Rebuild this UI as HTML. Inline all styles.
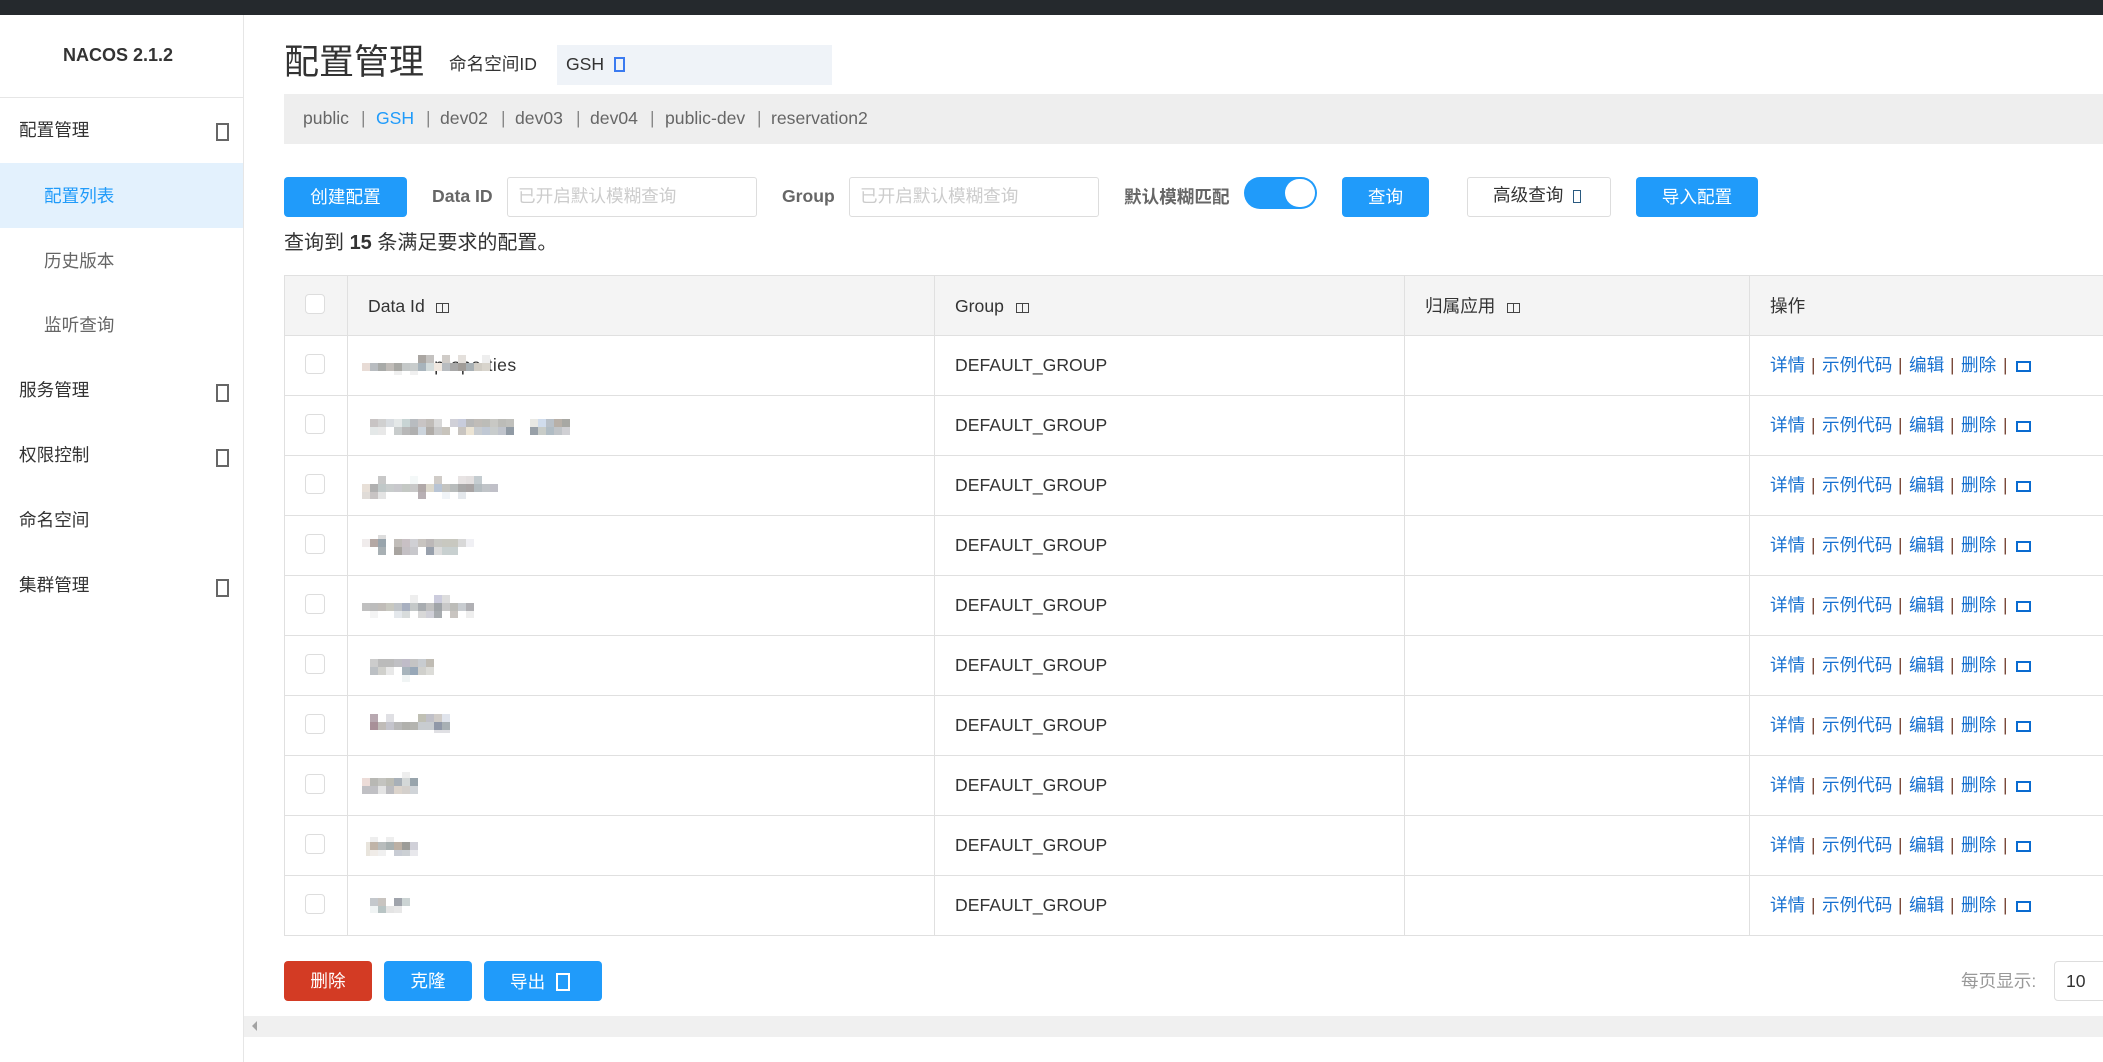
<!DOCTYPE html>
<html lang="zh"><head><meta charset="utf-8"><title>NACOS</title>
<style>
html,body{margin:0;padding:0;background:#fff}
#p{position:relative;width:2103px;height:1062px;overflow:hidden;background:#fff;font-family:"Liberation Sans","Noto Sans CJK SC",sans-serif;font-size:17.6px;color:#333}
#p div,#p span{position:absolute;box-sizing:border-box}
.t{white-space:nowrap;line-height:24px;height:24px}
.m{color:#333}.s{color:#666}
.b{background:#209bfa;border-radius:4px;color:#fff;height:40px;line-height:40px;text-align:center;top:177px}
.i{border:1px solid #ddd;border-radius:3px;background:#fff;height:40px;top:177px}
.ph{color:#ccc}
.lb{font-weight:bold;color:#666}
.ic{border:2px solid #666;width:13px;height:18px}
.h{height:1px;background:#e0e0e0;left:284px;width:1819px}
.v{width:1px;background:#e0e0e0;top:275px;height:661px}
.c{left:305px;width:20px;height:20px;border:1px solid #ddd;border-radius:4px;background:#fff}
.g{left:955px;color:#333}
.a{color:#1670d0}.pp{color:#7a4a3a}
.e{left:2016px;width:15px;height:11px;border:2px solid #0a6bd0}
</style></head><body><div id="p">
<div style="left:0;top:0;width:2103px;height:15px;background:#25292d"></div>
<!-- sidebar -->
<div style="left:243px;top:15px;width:1px;height:1047px;background:#e6e6e6"></div>
<div style="left:0;top:97px;width:243px;height:1px;background:#e6e6e6"></div>
<div class="t" style="left:63px;top:43px;font-weight:bold;font-size:18px;color:#333">NACOS 2.1.2</div>
<div style="left:0;top:163px;width:243px;height:65px;background:#e3f1fd"></div>
<div class="t m" style="left:19px;top:118px">配置管理</div>
<div class="ic" style="left:216px;top:123px"></div>
<div class="t" style="left:44px;top:184px;color:#209bfa">配置列表</div>
<div class="t s" style="left:44px;top:249px">历史版本</div>
<div class="t s" style="left:44px;top:313px">监听查询</div>
<div class="t m" style="left:19px;top:378px">服务管理</div>
<div class="ic" style="left:216px;top:384px"></div>
<div class="t m" style="left:19px;top:443px">权限控制</div>
<div class="ic" style="left:216px;top:449px"></div>
<div class="t m" style="left:19px;top:508px">命名空间</div>
<div class="t m" style="left:19px;top:573px">集群管理</div>
<div class="ic" style="left:216px;top:579px"></div>
<!-- header -->
<div class="t" style="left:284px;top:39px;font-size:35px;line-height:48px;height:48px;color:#333">配置管理</div>
<div class="t m" style="left:449px;top:52px">命名空间ID</div>
<div style="left:557px;top:45px;width:275px;height:40px;background:#eff3f8"></div>
<div class="t m" style="left:566px;top:52px">GSH</div>
<div style="left:614px;top:57px;width:11px;height:15px;border:2px solid #3a7af0"></div>
<div style="left:284px;top:94px;width:1819px;height:50px;background:#eee"></div>
<div class="t s" style="left:303px;top:106px">public</div>
<div class="t" style="left:361px;top:106px;color:#888">|</div>
<div class="t" style="left:376px;top:106px;color:#209bfa">GSH</div>
<div class="t" style="left:426px;top:106px;color:#888">|</div>
<div class="t s" style="left:440px;top:106px">dev02</div>
<div class="t" style="left:501px;top:106px;color:#888">|</div>
<div class="t s" style="left:515px;top:106px">dev03</div>
<div class="t" style="left:576px;top:106px;color:#888">|</div>
<div class="t s" style="left:590px;top:106px">dev04</div>
<div class="t" style="left:650px;top:106px;color:#888">|</div>
<div class="t s" style="left:665px;top:106px">public-dev</div>
<div class="t" style="left:757px;top:106px;color:#888">|</div>
<div class="t s" style="left:771px;top:106px">reservation2</div>
<!-- search row -->
<div class="b" style="left:284px;width:123px">创建配置</div>
<div class="t lb" style="left:432px;top:184px">Data ID</div>
<div class="i" style="left:507px;width:250px"></div>
<div class="t ph" style="left:518px;top:184px">已开启默认模糊查询</div>
<div class="t lb" style="left:782px;top:184px">Group</div>
<div class="i" style="left:849px;width:250px"></div>
<div class="t ph" style="left:860px;top:184px">已开启默认模糊查询</div>
<div class="t lb" style="left:1124px;top:185px">默认模糊匹配</div>
<div style="left:1244px;top:177px;width:73px;height:32px;border-radius:16px;background:#209bfa"></div>
<div style="left:1285px;top:179px;width:30px;height:28px;border-radius:15px;background:#fff"></div>
<div class="b" style="left:1342px;width:87px">查询</div>
<div class="i" style="left:1467px;width:144px"></div>
<div class="t" style="left:1493px;top:183px;color:#333">高级查询</div>
<div style="left:1573px;top:190px;width:8px;height:13px;border:1.5px solid #2a5a80"></div>
<div class="b" style="left:1636px;width:122px">导入配置</div>
<div class="t m" style="left:284px;top:231px;font-size:20px">查询到 <b>15</b> 条满足要求的配置。</div>
<!-- table -->
<div style="left:284px;top:275px;width:1819px;height:60px;background:#f4f4f4"></div>
<div class="h" style="top:275px"></div><div class="h" style="top:335px"></div><div class="h" style="top:395px"></div><div class="h" style="top:455px"></div><div class="h" style="top:515px"></div><div class="h" style="top:575px"></div><div class="h" style="top:635px"></div><div class="h" style="top:695px"></div><div class="h" style="top:755px"></div><div class="h" style="top:815px"></div><div class="h" style="top:875px"></div><div class="h" style="top:935px"></div>
<div class="v" style="left:284px"></div><div class="v" style="left:347px"></div><div class="v" style="left:934px"></div><div class="v" style="left:1404px"></div><div class="v" style="left:1749px"></div>
<div class="c" style="top:294px"></div><div class="c" style="top:354px"></div><div class="c" style="top:414px"></div><div class="c" style="top:474px"></div><div class="c" style="top:534px"></div><div class="c" style="top:594px"></div><div class="c" style="top:654px"></div><div class="c" style="top:714px"></div><div class="c" style="top:774px"></div><div class="c" style="top:834px"></div><div class="c" style="top:894px"></div>
<div class="t m" style="left:368px;top:294px">Data Id</div>
<div style="left:436px;top:303px;width:7px;height:10px;border:1px solid #444"></div><div style="left:442px;top:303px;width:7px;height:10px;border:1px solid #444"></div>
<div class="t m" style="left:955px;top:294px">Group</div>
<div style="left:1016px;top:303px;width:7px;height:10px;border:1px solid #444"></div><div style="left:1022px;top:303px;width:7px;height:10px;border:1px solid #444"></div>
<div class="t m" style="left:1425px;top:294px">归属应用</div>
<div style="left:1507px;top:303px;width:7px;height:10px;border:1px solid #444"></div><div style="left:1513px;top:303px;width:7px;height:10px;border:1px solid #444"></div>
<div class="t m" style="left:1770px;top:294px">操作</div>
<div class="t m" style="left:429px;top:353px;letter-spacing:.4px">.properties</div>
<div class="t g" style="top:353px">DEFAULT_GROUP</div>
<div class="t g" style="top:413px">DEFAULT_GROUP</div>
<div class="t g" style="top:473px">DEFAULT_GROUP</div>
<div class="t g" style="top:533px">DEFAULT_GROUP</div>
<div class="t g" style="top:593px">DEFAULT_GROUP</div>
<div class="t g" style="top:653px">DEFAULT_GROUP</div>
<div class="t g" style="top:713px">DEFAULT_GROUP</div>
<div class="t g" style="top:773px">DEFAULT_GROUP</div>
<div class="t g" style="top:833px">DEFAULT_GROUP</div>
<div class="t g" style="top:893px">DEFAULT_GROUP</div>
<div class="t a" style="left:1770px;top:353px">详情</div><div class="t pp" style="left:1811px;top:353px">|</div><div class="t a" style="left:1822px;top:353px">示例代码</div><div class="t pp" style="left:1898px;top:353px">|</div><div class="t a" style="left:1909px;top:353px">编辑</div><div class="t pp" style="left:1950px;top:353px">|</div><div class="t a" style="left:1961px;top:353px">删除</div><div class="t pp" style="left:2003px;top:353px">|</div><div class="e" style="top:361px"></div>
<div class="t a" style="left:1770px;top:413px">详情</div><div class="t pp" style="left:1811px;top:413px">|</div><div class="t a" style="left:1822px;top:413px">示例代码</div><div class="t pp" style="left:1898px;top:413px">|</div><div class="t a" style="left:1909px;top:413px">编辑</div><div class="t pp" style="left:1950px;top:413px">|</div><div class="t a" style="left:1961px;top:413px">删除</div><div class="t pp" style="left:2003px;top:413px">|</div><div class="e" style="top:421px"></div>
<div class="t a" style="left:1770px;top:473px">详情</div><div class="t pp" style="left:1811px;top:473px">|</div><div class="t a" style="left:1822px;top:473px">示例代码</div><div class="t pp" style="left:1898px;top:473px">|</div><div class="t a" style="left:1909px;top:473px">编辑</div><div class="t pp" style="left:1950px;top:473px">|</div><div class="t a" style="left:1961px;top:473px">删除</div><div class="t pp" style="left:2003px;top:473px">|</div><div class="e" style="top:481px"></div>
<div class="t a" style="left:1770px;top:533px">详情</div><div class="t pp" style="left:1811px;top:533px">|</div><div class="t a" style="left:1822px;top:533px">示例代码</div><div class="t pp" style="left:1898px;top:533px">|</div><div class="t a" style="left:1909px;top:533px">编辑</div><div class="t pp" style="left:1950px;top:533px">|</div><div class="t a" style="left:1961px;top:533px">删除</div><div class="t pp" style="left:2003px;top:533px">|</div><div class="e" style="top:541px"></div>
<div class="t a" style="left:1770px;top:593px">详情</div><div class="t pp" style="left:1811px;top:593px">|</div><div class="t a" style="left:1822px;top:593px">示例代码</div><div class="t pp" style="left:1898px;top:593px">|</div><div class="t a" style="left:1909px;top:593px">编辑</div><div class="t pp" style="left:1950px;top:593px">|</div><div class="t a" style="left:1961px;top:593px">删除</div><div class="t pp" style="left:2003px;top:593px">|</div><div class="e" style="top:601px"></div>
<div class="t a" style="left:1770px;top:653px">详情</div><div class="t pp" style="left:1811px;top:653px">|</div><div class="t a" style="left:1822px;top:653px">示例代码</div><div class="t pp" style="left:1898px;top:653px">|</div><div class="t a" style="left:1909px;top:653px">编辑</div><div class="t pp" style="left:1950px;top:653px">|</div><div class="t a" style="left:1961px;top:653px">删除</div><div class="t pp" style="left:2003px;top:653px">|</div><div class="e" style="top:661px"></div>
<div class="t a" style="left:1770px;top:713px">详情</div><div class="t pp" style="left:1811px;top:713px">|</div><div class="t a" style="left:1822px;top:713px">示例代码</div><div class="t pp" style="left:1898px;top:713px">|</div><div class="t a" style="left:1909px;top:713px">编辑</div><div class="t pp" style="left:1950px;top:713px">|</div><div class="t a" style="left:1961px;top:713px">删除</div><div class="t pp" style="left:2003px;top:713px">|</div><div class="e" style="top:721px"></div>
<div class="t a" style="left:1770px;top:773px">详情</div><div class="t pp" style="left:1811px;top:773px">|</div><div class="t a" style="left:1822px;top:773px">示例代码</div><div class="t pp" style="left:1898px;top:773px">|</div><div class="t a" style="left:1909px;top:773px">编辑</div><div class="t pp" style="left:1950px;top:773px">|</div><div class="t a" style="left:1961px;top:773px">删除</div><div class="t pp" style="left:2003px;top:773px">|</div><div class="e" style="top:781px"></div>
<div class="t a" style="left:1770px;top:833px">详情</div><div class="t pp" style="left:1811px;top:833px">|</div><div class="t a" style="left:1822px;top:833px">示例代码</div><div class="t pp" style="left:1898px;top:833px">|</div><div class="t a" style="left:1909px;top:833px">编辑</div><div class="t pp" style="left:1950px;top:833px">|</div><div class="t a" style="left:1961px;top:833px">删除</div><div class="t pp" style="left:2003px;top:833px">|</div><div class="e" style="top:841px"></div>
<div class="t a" style="left:1770px;top:893px">详情</div><div class="t pp" style="left:1811px;top:893px">|</div><div class="t a" style="left:1822px;top:893px">示例代码</div><div class="t pp" style="left:1898px;top:893px">|</div><div class="t a" style="left:1909px;top:893px">编辑</div><div class="t pp" style="left:1950px;top:893px">|</div><div class="t a" style="left:1961px;top:893px">删除</div><div class="t pp" style="left:2003px;top:893px">|</div><div class="e" style="top:901px"></div>
<!-- mosaics -->
<svg width="2103" height="1062" style="position:absolute;left:0;top:0" shape-rendering="crispEdges">
<g id="r1"><rect x="418" y="355" width="8" height="8" fill="#aaa6a2"/><rect x="426" y="355" width="8" height="8" fill="#c4c2c0"/><rect x="442" y="355" width="8" height="8" fill="#d0ccc8"/><rect x="458" y="355" width="8" height="8" fill="#e4e0dc"/><rect x="482" y="355" width="8" height="8" fill="#eee"/>
<rect x="362" y="363" width="8" height="8" fill="#e8dcd6"/><rect x="370" y="363" width="8" height="8" fill="#b8bcc0"/><rect x="378" y="363" width="8" height="8" fill="#a8aaa8"/><rect x="386" y="363" width="8" height="8" fill="#c0bcb8"/><rect x="394" y="363" width="8" height="8" fill="#a8a8a4"/><rect x="402" y="363" width="8" height="8" fill="#c4c8c8"/><rect x="410" y="363" width="8" height="8" fill="#c8cccc"/><rect x="418" y="363" width="8" height="8" fill="#a8b4bc"/><rect x="426" y="363" width="8" height="8" fill="#d4dcdc"/><rect x="434" y="363" width="8" height="8" fill="#f0e8e0"/><rect x="442" y="363" width="8" height="8" fill="#b8bcc0"/><rect x="450" y="363" width="8" height="8" fill="#a8a8a8"/><rect x="458" y="363" width="8" height="8" fill="#a09c98"/><rect x="466" y="363" width="8" height="8" fill="#a8b0b4"/><rect x="474" y="363" width="8" height="8" fill="#d0ccc4"/><rect x="482" y="363" width="8" height="8" fill="#d8d4cc"/>
<rect x="394" y="371" width="8" height="4" fill="#f0f0f0"/><rect x="410" y="371" width="8" height="4" fill="#f0f0f0"/></g>
<g><rect x="370" y="419" width="8" height="8" fill="#c8c4c4"/><rect x="378" y="419" width="8" height="8" fill="#d0d0d0"/><rect x="386" y="419" width="8" height="8" fill="#d8dce0"/><rect x="394" y="419" width="8" height="8" fill="#e4e8e8"/><rect x="402" y="419" width="8" height="8" fill="#c8d4d4"/><rect x="410" y="419" width="8" height="8" fill="#b8bcc0"/><rect x="418" y="419" width="8" height="8" fill="#c8c4c4"/><rect x="426" y="419" width="8" height="8" fill="#c0bcb8"/><rect x="434" y="419" width="8" height="8" fill="#d8d8d8"/><rect x="450" y="419" width="8" height="8" fill="#d0d0d8"/><rect x="458" y="419" width="8" height="8" fill="#c8ccdc"/><rect x="466" y="419" width="8" height="8" fill="#b8b8b8"/><rect x="474" y="419" width="8" height="8" fill="#c0bcb8"/><rect x="482" y="419" width="8" height="8" fill="#bcbcb8"/><rect x="490" y="419" width="8" height="8" fill="#c8c8c4"/><rect x="498" y="419" width="8" height="8" fill="#bcbcb8"/><rect x="506" y="419" width="8" height="8" fill="#c0c0bc"/><rect x="530" y="419" width="8" height="8" fill="#e8e8e4"/><rect x="538" y="419" width="8" height="8" fill="#d0dcec"/><rect x="546" y="419" width="8" height="8" fill="#b8c0c8"/><rect x="554" y="419" width="8" height="8" fill="#b8b0a8"/><rect x="562" y="419" width="8" height="8" fill="#a8a8a4"/>
<rect x="370" y="427" width="8" height="8" fill="#e4e8e8"/><rect x="378" y="427" width="8" height="8" fill="#e8e8e8"/><rect x="394" y="427" width="8" height="8" fill="#c8cccc"/><rect x="402" y="427" width="8" height="8" fill="#b8b8b8"/><rect x="410" y="427" width="8" height="8" fill="#b0b0b0"/><rect x="418" y="427" width="8" height="8" fill="#ccd4dc"/><rect x="426" y="427" width="8" height="8" fill="#b0aca8"/><rect x="434" y="427" width="8" height="8" fill="#c8c8c8"/><rect x="442" y="427" width="8" height="8" fill="#c8c4bc"/><rect x="458" y="427" width="8" height="8" fill="#c8c4c0"/><rect x="466" y="427" width="8" height="8" fill="#ece4d4"/><rect x="474" y="427" width="8" height="8" fill="#c8ccd0"/><rect x="482" y="427" width="8" height="8" fill="#c0c8d4"/><rect x="490" y="427" width="8" height="8" fill="#c8cccc"/><rect x="498" y="427" width="8" height="8" fill="#c0c4cc"/><rect x="506" y="427" width="8" height="8" fill="#909aa4"/><rect x="530" y="427" width="8" height="8" fill="#98a0a8"/><rect x="538" y="427" width="8" height="8" fill="#c8ccc8"/><rect x="546" y="427" width="8" height="8" fill="#b0bcc4"/><rect x="554" y="427" width="8" height="8" fill="#c0c4c8"/><rect x="562" y="427" width="8" height="8" fill="#d0d0d4"/></g>
<g><rect x="378" y="476" width="8" height="8" fill="#c8c8c8"/><rect x="410" y="476" width="8" height="8" fill="#f4f8f8"/><rect x="434" y="476" width="8" height="8" fill="#d0ccc8"/><rect x="458" y="476" width="8" height="8" fill="#e8e4e4"/><rect x="466" y="476" width="8" height="8" fill="#e4e0e0"/><rect x="474" y="476" width="8" height="8" fill="#c4ccd0"/>
<rect x="362" y="484" width="8" height="8" fill="#e8e0d8"/><rect x="370" y="484" width="8" height="8" fill="#b0b0b0"/><rect x="378" y="484" width="8" height="8" fill="#c0c8c8"/><rect x="386" y="484" width="8" height="8" fill="#c8cccc"/><rect x="394" y="484" width="8" height="8" fill="#c8c8cc"/><rect x="402" y="484" width="8" height="8" fill="#c4c8c4"/><rect x="410" y="484" width="8" height="8" fill="#c8c8c8"/><rect x="418" y="484" width="8" height="8" fill="#b0a8a8"/><rect x="426" y="484" width="8" height="8" fill="#dcd8cc"/><rect x="434" y="484" width="8" height="8" fill="#b8c4d4"/><rect x="442" y="484" width="8" height="8" fill="#c4c4c0"/><rect x="450" y="484" width="8" height="8" fill="#b8bcbc"/><rect x="458" y="484" width="8" height="8" fill="#a8a8a8"/><rect x="466" y="484" width="8" height="8" fill="#a8a4a4"/><rect x="474" y="484" width="8" height="8" fill="#b4bcc0"/><rect x="482" y="484" width="8" height="8" fill="#c0c4c8"/><rect x="490" y="484" width="8" height="8" fill="#c0c0c8"/>
<rect x="362" y="492" width="8" height="7" fill="#e0dcd8"/><rect x="370" y="492" width="8" height="7" fill="#c8c4c4"/><rect x="378" y="492" width="8" height="7" fill="#e4e4e4"/><rect x="418" y="492" width="8" height="7" fill="#b8b0b4"/><rect x="442" y="492" width="8" height="7" fill="#f0f4f8"/><rect x="458" y="492" width="8" height="7" fill="#e4e8ec"/></g>
<g><rect x="378" y="535" width="8" height="4" fill="#ddd"/>
<rect x="362" y="539" width="8" height="8" fill="#f0ecec"/><rect x="370" y="539" width="8" height="8" fill="#b4a8a4"/><rect x="378" y="539" width="8" height="8" fill="#98a4ac"/><rect x="394" y="539" width="8" height="8" fill="#c0bcb8"/><rect x="402" y="539" width="8" height="8" fill="#c8c0c4"/><rect x="410" y="539" width="8" height="8" fill="#d0d0d4"/><rect x="418" y="539" width="8" height="8" fill="#c8c4c0"/><rect x="426" y="539" width="8" height="8" fill="#bcb8b8"/><rect x="434" y="539" width="8" height="8" fill="#c8c8c4"/><rect x="442" y="539" width="8" height="8" fill="#c8c8c0"/><rect x="450" y="539" width="8" height="8" fill="#c8c8c0"/><rect x="458" y="539" width="8" height="8" fill="#d8d8d8"/><rect x="466" y="539" width="8" height="8" fill="#f0f0f4"/>
<rect x="378" y="547" width="8" height="8" fill="#a8b0b4"/><rect x="394" y="547" width="8" height="8" fill="#a8a4a0"/><rect x="402" y="547" width="8" height="8" fill="#c4c0c4"/><rect x="410" y="547" width="8" height="8" fill="#c8c8cc"/><rect x="426" y="547" width="8" height="8" fill="#98a0ac"/><rect x="434" y="547" width="8" height="8" fill="#dcdcdc"/><rect x="442" y="547" width="16" height="8" fill="#c8d0d0"/></g>
<g><rect x="410" y="595" width="8" height="8" fill="#eee"/><rect x="434" y="595" width="8" height="8" fill="#ccd"/><rect x="442" y="595" width="8" height="8" fill="#ddd"/>
<rect x="362" y="603" width="8" height="8" fill="#c0c0c0"/><rect x="370" y="603" width="8" height="8" fill="#bcbcbc"/><rect x="378" y="603" width="8" height="8" fill="#c0bcb8"/><rect x="386" y="603" width="8" height="8" fill="#c8c8c0"/><rect x="394" y="603" width="8" height="8" fill="#c0c4c8"/><rect x="402" y="603" width="8" height="8" fill="#a8b0c0"/><rect x="410" y="603" width="8" height="8" fill="#c4c8c8"/><rect x="418" y="603" width="8" height="8" fill="#a8acb0"/><rect x="426" y="603" width="8" height="8" fill="#c0c0c0"/><rect x="434" y="603" width="8" height="8" fill="#a0a4a8"/><rect x="442" y="603" width="8" height="8" fill="#c8c8c8"/><rect x="450" y="603" width="8" height="8" fill="#bcbcb8"/><rect x="458" y="603" width="8" height="8" fill="#c8ccd0"/><rect x="466" y="603" width="8" height="8" fill="#b0b0b4"/>
<rect x="370" y="611" width="8" height="7" fill="#f4f4f4"/><rect x="394" y="611" width="8" height="7" fill="#e4e8ec"/><rect x="402" y="611" width="8" height="7" fill="#d8dcdc"/><rect x="418" y="611" width="8" height="7" fill="#d8d8d8"/><rect x="426" y="611" width="8" height="7" fill="#d0d0d8"/><rect x="434" y="611" width="8" height="7" fill="#a8acb0"/><rect x="450" y="611" width="8" height="7" fill="#c8c4c0"/><rect x="466" y="611" width="8" height="7" fill="#eee"/></g>
<g><rect x="370" y="659" width="8" height="8" fill="#ccc"/><rect x="378" y="659" width="8" height="8" fill="#bbb"/><rect x="386" y="659" width="8" height="8" fill="#bbb"/><rect x="394" y="659" width="8" height="8" fill="#c0c0c4"/><rect x="402" y="659" width="8" height="8" fill="#c0bcc8"/><rect x="410" y="659" width="8" height="8" fill="#c4c4c4"/><rect x="418" y="659" width="8" height="8" fill="#c8ccd0"/><rect x="426" y="659" width="8" height="8" fill="#c0bcb4"/>
<rect x="370" y="667" width="8" height="8" fill="#bcc0c4"/><rect x="378" y="667" width="8" height="8" fill="#d0d0cc"/><rect x="386" y="667" width="8" height="8" fill="#e8e8e8"/><rect x="402" y="667" width="8" height="8" fill="#a8b4bc"/><rect x="410" y="667" width="8" height="8" fill="#98a8b8"/><rect x="418" y="667" width="8" height="8" fill="#d0d0cc"/><rect x="426" y="667" width="8" height="8" fill="#dcdcd8"/><rect x="402" y="675" width="8" height="7" fill="#f0f4f4"/></g>
<g><rect x="370" y="714" width="8" height="8" fill="#b8a8b0"/><rect x="386" y="714" width="8" height="8" fill="#e0e0e4"/><rect x="418" y="714" width="8" height="8" fill="#c0c0b4"/><rect x="426" y="714" width="8" height="8" fill="#c0c0c8"/><rect x="434" y="714" width="8" height="8" fill="#d0ccc8"/><rect x="442" y="714" width="8" height="8" fill="#e0e4ec"/>
<rect x="370" y="722" width="8" height="8" fill="#a89098"/><rect x="378" y="722" width="8" height="8" fill="#c0bcb8"/><rect x="386" y="722" width="8" height="8" fill="#c4c4cc"/><rect x="394" y="722" width="8" height="8" fill="#b8b8b8"/><rect x="402" y="722" width="8" height="8" fill="#b0b0ac"/><rect x="410" y="722" width="8" height="8" fill="#b4b4b0"/><rect x="418" y="722" width="8" height="8" fill="#c8ccd0"/><rect x="426" y="722" width="8" height="8" fill="#c8ccd0"/><rect x="434" y="722" width="8" height="8" fill="#9098a8"/><rect x="442" y="722" width="8" height="8" fill="#a8b0b4"/><rect x="434" y="730" width="16" height="3" fill="#e0e0e4"/></g>
<g><rect x="402" y="772" width="8" height="6" fill="#eee"/><rect x="362" y="778" width="8" height="8" fill="#ecdcd8"/><rect x="370" y="778" width="8" height="8" fill="#b8b8b4"/><rect x="378" y="778" width="8" height="8" fill="#c4c4c0"/><rect x="386" y="778" width="8" height="8" fill="#bcbcb4"/><rect x="394" y="778" width="8" height="8" fill="#a8b0b8"/><rect x="402" y="778" width="8" height="8" fill="#d4d8d8"/><rect x="410" y="778" width="8" height="8" fill="#98a4ac"/>
<rect x="362" y="786" width="8" height="8" fill="#c0c0c4"/><rect x="370" y="786" width="8" height="8" fill="#c0c0c4"/><rect x="378" y="786" width="8" height="8" fill="#e4e4e4"/><rect x="386" y="786" width="8" height="8" fill="#bcbcc0"/><rect x="394" y="786" width="8" height="8" fill="#dcd4cc"/><rect x="402" y="786" width="8" height="8" fill="#d4d0cc"/><rect x="410" y="786" width="8" height="8" fill="#d0d4d8"/></g>
<g><rect x="370" y="837" width="8" height="5" fill="#eee"/><rect x="386" y="837" width="8" height="5" fill="#eee"/><rect x="366" y="842" width="4" height="14" fill="#e8e4dc"/><rect x="370" y="842" width="8" height="8" fill="#c0b4a8"/><rect x="378" y="842" width="8" height="8" fill="#b8bcbc"/><rect x="386" y="842" width="8" height="8" fill="#a8b0b0"/><rect x="394" y="842" width="8" height="8" fill="#bcb0a4"/><rect x="402" y="842" width="8" height="8" fill="#9c9c98"/><rect x="410" y="842" width="8" height="8" fill="#d0d0d8"/>
<rect x="370" y="850" width="8" height="6" fill="#f0ece8"/><rect x="378" y="850" width="8" height="6" fill="#f0f0f0"/><rect x="394" y="850" width="8" height="6" fill="#c8ccd4"/><rect x="402" y="850" width="8" height="6" fill="#ccd0d4"/><rect x="410" y="850" width="8" height="6" fill="#e8e8ec"/></g>
<g><rect x="370" y="898" width="8" height="8" fill="#c4c8cc"/><rect x="378" y="898" width="8" height="8" fill="#c8c4c0"/><rect x="394" y="898" width="8" height="8" fill="#a0a4ac"/><rect x="402" y="898" width="8" height="8" fill="#ccd4d4"/><rect x="370" y="906" width="8" height="7" fill="#f0f4f4"/><rect x="378" y="906" width="8" height="7" fill="#b8c4c4"/><rect x="386" y="906" width="8" height="7" fill="#e4e4e4"/><rect x="394" y="906" width="8" height="7" fill="#e8e8e8"/></g>
</svg>
<!-- bottom -->
<div class="b" style="left:284px;top:961px;width:88px;background:#d33b24">删除</div>
<div class="b" style="left:384px;top:961px;width:88px">克隆</div>
<div class="b" style="left:484px;top:961px;width:118px"></div>
<div class="t" style="left:510px;top:970px;color:#fff">导出</div>
<div style="left:556px;top:973px;width:14px;height:18px;border:2px solid #fff"></div>
<div style="left:244px;top:1016px;width:1859px;height:21px;background:#f0f0f0"></div>
<div style="left:252px;top:1021px;width:0;height:0;border-style:solid;border-width:5px 5px 5px 0;border-color:transparent #a3a3a3 transparent transparent"></div>
<div class="t" style="left:1961px;top:969px;color:#999">每页显示:</div>
<div style="left:2054px;top:961px;width:60px;height:40px;border:1px solid #ddd;border-radius:4px;background:#fff"></div>
<div class="t m" style="left:2066px;top:969px">10</div>
</div></body></html>
